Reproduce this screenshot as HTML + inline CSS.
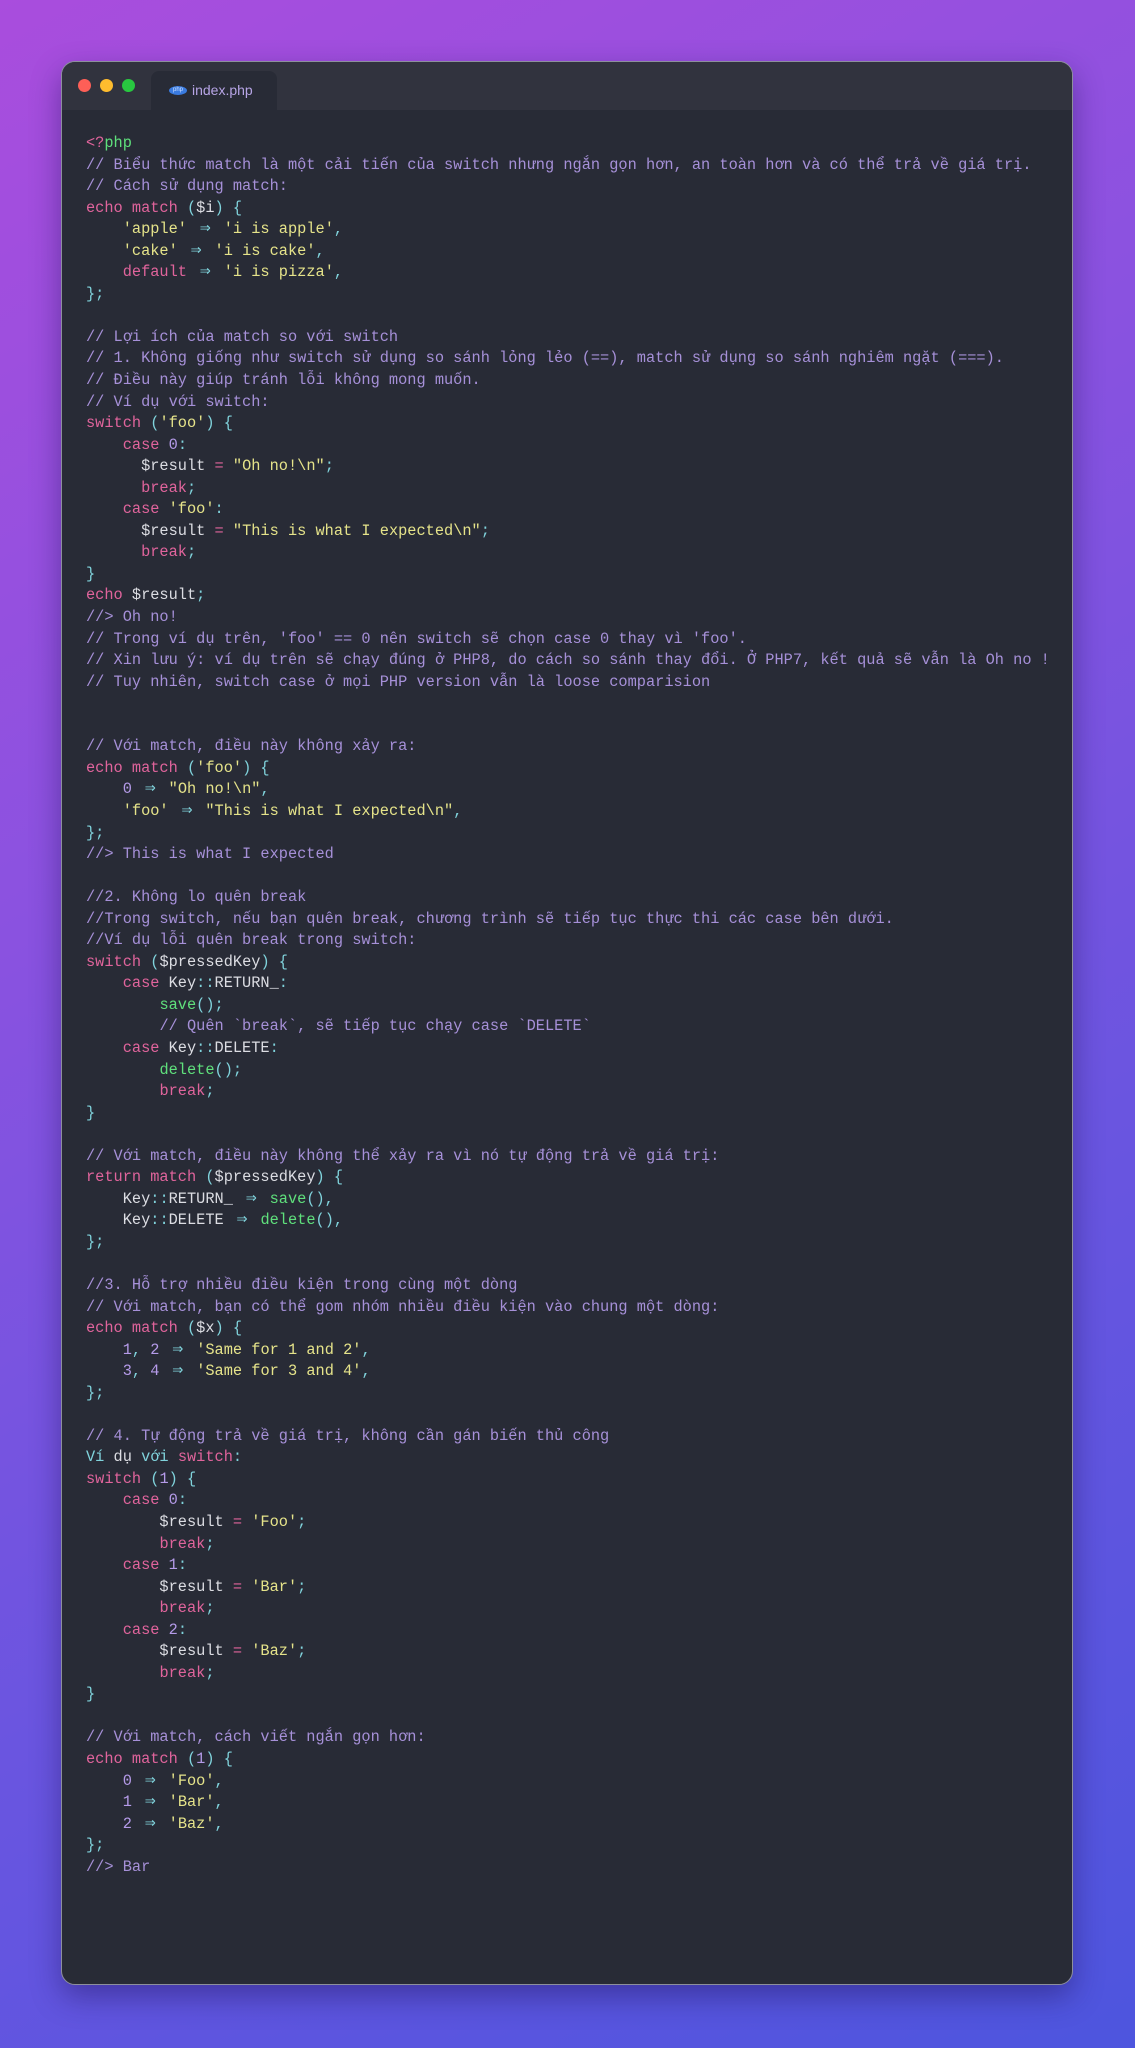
<!DOCTYPE html>
<html><head><meta charset="utf-8">
<style>
html,body{margin:0;padding:0}
body{width:1135px;height:2048px;overflow:hidden;background:linear-gradient(150deg,#a94ddd 0%,#8a52e0 35%,#6a55e0 65%,#4d55de 100%);position:relative;font-family:"Liberation Mono","Noto Sans CJK SC",monospace}
.win{position:absolute;left:61px;top:61px;width:1010px;height:1922px;background:#282b36;border:1px solid #8d8f9c;border-radius:14px;box-shadow:0 12px 30px rgba(30,20,90,.45);overflow:hidden}
.bar{position:absolute;left:0;top:0;right:0;height:48px;background:#31333e}
.dot{position:absolute;top:17px;width:13px;height:13px;border-radius:50%}
.tab{position:absolute;left:89px;top:9px;width:126px;height:39px;background:#282b36;border-radius:8px 8px 0 0;color:#b7a5e6;font-family:"Liberation Sans",sans-serif;font-size:14px}
.tab span{position:absolute;left:41px;top:11px}
.tab i{position:absolute;left:18px;top:15px;width:18px;height:9px;border-radius:50%;background:#3a7be0;font-style:normal;font-size:6px;color:#cfe0ff;text-align:center;line-height:9px;font-family:"Liberation Sans",sans-serif}
pre{position:absolute;left:24px;top:71px;margin:0;font-family:"Liberation Mono",monospace;font-size:15.3px;line-height:21.55px;color:#dcdde3}
.c{color:#a690d8}.k{color:#e0649c}.s{color:#e5e38a}.p{color:#80d3dc}.n{color:#b59be9}.f{color:#5fe07c}
.a{display:inline-block;width:18.36px;text-align:center;color:#80d3dc;font-size:18px;line-height:10px;vertical-align:baseline}
</style></head><body>
<div class="win">
<div class="bar">
<div class="dot" style="left:16px;background:#fe5f57"></div>
<div class="dot" style="left:38px;background:#febc2e"></div>
<div class="dot" style="left:60px;background:#28c840"></div>
<div class="tab"><i>php</i><span>index.php</span></div>
</div>
<pre><span class="k">&lt;?</span><span class="f">php</span>
<span class="c">// Biểu thức match là một cải tiến của switch nhưng ngắn gọn hơn, an toàn hơn và có thể trả về giá trị.</span>
<span class="c">// Cách sử dụng match:</span>
<span class="k">echo match</span> <span class="p">(</span>$i<span class="p">) {</span>
    <span class="s">'apple'</span> <span class="a">⇒</span> <span class="s">'i is apple'</span><span class="p">,</span>
    <span class="s">'cake'</span> <span class="a">⇒</span> <span class="s">'i is cake'</span><span class="p">,</span>
    <span class="k">default</span> <span class="a">⇒</span> <span class="s">'i is pizza'</span><span class="p">,</span>
<span class="p">};</span>

<span class="c">// Lợi ích của match so với switch</span>
<span class="c">// 1. Không giống như switch sử dụng so sánh lỏng lẻo (==), match sử dụng so sánh nghiêm ngặt (===).</span>
<span class="c">// Điều này giúp tránh lỗi không mong muốn.</span>
<span class="c">// Ví dụ với switch:</span>
<span class="k">switch</span> <span class="p">(</span><span class="s">'foo'</span><span class="p">) {</span>
    <span class="k">case</span> <span class="n">0</span><span class="p">:</span>
      $result <span class="k">=</span> <span class="s">"Oh no!\n"</span><span class="p">;</span>
      <span class="k">break</span><span class="p">;</span>
    <span class="k">case</span> <span class="s">'foo'</span><span class="p">:</span>
      $result <span class="k">=</span> <span class="s">"This is what I expected\n"</span><span class="p">;</span>
      <span class="k">break</span><span class="p">;</span>
<span class="p">}</span>
<span class="k">echo</span> $result<span class="p">;</span>
<span class="c">//&gt; Oh no!</span>
<span class="c">// Trong ví dụ trên, 'foo' == 0 nên switch sẽ chọn case 0 thay vì 'foo'.</span>
<span class="c">// Xin lưu ý: ví dụ trên sẽ chạy đúng ở PHP8, do cách so sánh thay đổi. Ở PHP7, kết quả sẽ vẫn là Oh no !</span>
<span class="c">// Tuy nhiên, switch case ở mọi PHP version vẫn là loose comparision</span>


<span class="c">// Với match, điều này không xảy ra:</span>
<span class="k">echo match</span> <span class="p">(</span><span class="s">'foo'</span><span class="p">) {</span>
    <span class="n">0</span> <span class="a">⇒</span> <span class="s">"Oh no!\n"</span><span class="p">,</span>
    <span class="s">'foo'</span> <span class="a">⇒</span> <span class="s">"This is what I expected\n"</span><span class="p">,</span>
<span class="p">};</span>
<span class="c">//&gt; This is what I expected</span>

<span class="c">//2. Không lo quên break</span>
<span class="c">//Trong switch, nếu bạn quên break, chương trình sẽ tiếp tục thực thi các case bên dưới.</span>
<span class="c">//Ví dụ lỗi quên break trong switch:</span>
<span class="k">switch</span> <span class="p">(</span>$pressedKey<span class="p">) {</span>
    <span class="k">case</span> Key<span class="p">::</span>RETURN_<span class="p">:</span>
        <span class="f">save</span><span class="p">();</span>
        <span class="c">// Quên `break`, sẽ tiếp tục chạy case `DELETE`</span>
    <span class="k">case</span> Key<span class="p">::</span>DELETE<span class="p">:</span>
        <span class="f">delete</span><span class="p">();</span>
        <span class="k">break</span><span class="p">;</span>
<span class="p">}</span>

<span class="c">// Với match, điều này không thể xảy ra vì nó tự động trả về giá trị:</span>
<span class="k">return match</span> <span class="p">(</span>$pressedKey<span class="p">) {</span>
    Key<span class="p">::</span>RETURN_ <span class="a">⇒</span> <span class="f">save</span><span class="p">(),</span>
    Key<span class="p">::</span>DELETE <span class="a">⇒</span> <span class="f">delete</span><span class="p">(),</span>
<span class="p">};</span>

<span class="c">//3. Hỗ trợ nhiều điều kiện trong cùng một dòng</span>
<span class="c">// Với match, bạn có thể gom nhóm nhiều điều kiện vào chung một dòng:</span>
<span class="k">echo match</span> <span class="p">(</span>$x<span class="p">) {</span>
    <span class="n">1</span><span class="p">,</span> <span class="n">2</span> <span class="a">⇒</span> <span class="s">'Same for 1 and 2'</span><span class="p">,</span>
    <span class="n">3</span><span class="p">,</span> <span class="n">4</span> <span class="a">⇒</span> <span class="s">'Same for 3 and 4'</span><span class="p">,</span>
<span class="p">};</span>

<span class="c">// 4. Tự động trả về giá trị, không cần gán biến thủ công</span>
<span class="p">Ví</span> dụ <span class="p">với</span> <span class="k">switch</span><span class="p">:</span>
<span class="k">switch</span> <span class="p">(</span><span class="n">1</span><span class="p">) {</span>
    <span class="k">case</span> <span class="n">0</span><span class="p">:</span>
        $result <span class="k">=</span> <span class="s">'Foo'</span><span class="p">;</span>
        <span class="k">break</span><span class="p">;</span>
    <span class="k">case</span> <span class="n">1</span><span class="p">:</span>
        $result <span class="k">=</span> <span class="s">'Bar'</span><span class="p">;</span>
        <span class="k">break</span><span class="p">;</span>
    <span class="k">case</span> <span class="n">2</span><span class="p">:</span>
        $result <span class="k">=</span> <span class="s">'Baz'</span><span class="p">;</span>
        <span class="k">break</span><span class="p">;</span>
<span class="p">}</span>

<span class="c">// Với match, cách viết ngắn gọn hơn:</span>
<span class="k">echo match</span> <span class="p">(</span><span class="n">1</span><span class="p">) {</span>
    <span class="n">0</span> <span class="a">⇒</span> <span class="s">'Foo'</span><span class="p">,</span>
    <span class="n">1</span> <span class="a">⇒</span> <span class="s">'Bar'</span><span class="p">,</span>
    <span class="n">2</span> <span class="a">⇒</span> <span class="s">'Baz'</span><span class="p">,</span>
<span class="p">};</span>
<span class="c">//&gt; Bar</span></pre>
</div>
</body></html>
